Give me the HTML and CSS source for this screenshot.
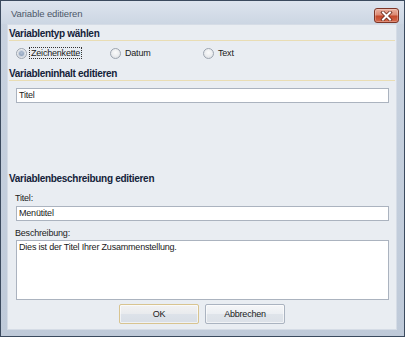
FILE: index.html
```html
<!DOCTYPE html>
<html lang="de">
<head>
<meta charset="utf-8">
<title>Variable editieren</title>
<link rel="stylesheet" href="styles.css">
</head>
<body>
<div class="window">
  <div class="titlebar">
    <span class="title">Variable editieren</span>
    <button class="close" aria-label="Schließen">
      <svg width="13" height="10" viewBox="0 0 13 10">
        <path d="M3 1.5 L10 8.5 M10 1.5 L3 8.5" stroke="#6a2a1c" stroke-width="3.6" stroke-linecap="square" fill="none"/>
        <path d="M3 1.5 L10 8.5 M10 1.5 L3 8.5" stroke="#ffffff" stroke-width="2" stroke-linecap="square" fill="none"/>
      </svg>
    </button>
  </div>
  <div class="content">
    <div class="heading">Variablentyp wählen</div>
    <div class="radios">
      <div class="radio"><span class="circle checked"></span><span class="rlabel focus">Zeichenkette</span></div>
      <div class="radio"><span class="circle"></span><span class="rlabel">Datum</span></div>
      <div class="radio"><span class="circle"></span><span class="rlabel">Text</span></div>
    </div>
    <div class="heading h2">Variableninhalt editieren</div>
    <div class="form first">
      <div class="input">Titel</div>
    </div>
    <div class="heading h3">Variablenbeschreibung editieren</div>
    <div class="form">
      <div class="label">Titel:</div>
      <div class="input">Menütitel</div>
      <div class="label l2">Beschreibung:</div>
      <div class="textarea">Dies ist der Titel Ihrer Zusammenstellung.</div>
    </div>
    <div class="buttons">
      <button class="btn default">OK</button>
      <button class="btn">Abbrechen</button>
    </div>
  </div>
</div>
</body>
</html>
```
FILE: styles.css
```css
* { box-sizing: border-box; }
html, body { margin: 0; padding: 0; }
body {
  width: 405px;
  height: 337px;
  overflow: hidden;
  font-family: "Liberation Sans", Arial, sans-serif;
  font-size: 9px;
  letter-spacing: -0.2px;
  color: #1a1a1a;
}
.window {
  width: 405px;
  height: 337px;
  border: 1px solid #3b4a5e;
  background: linear-gradient(#c9d3e0, #bfcad9);
  padding: 0 7px 6px 6px;
  display: flex;
  flex-direction: column;
}
.titlebar {
  height: 23px;
  display: flex;
  align-items: flex-start;
  margin: 0 -7px 0 -6px;
  padding: 0 5px 0 10px;
  background: linear-gradient(#dde4ee, #ccd6e3);
}
.title {
  margin-top: 7px;
  font-size: 9.5px;
  letter-spacing: -0.1px;
  line-height: 12px;
  color: #4c5868;
}
.close {
  margin: 7px 0 0 auto;
  width: 25px;
  height: 15px;
  padding: 0;
  border: 1px solid #7d3526;
  border-radius: 3px;
  background: linear-gradient(#eab0a0 0%, #dd8a74 45%, #c4492c 55%, #d5694c 100%);
  display: flex;
  align-items: center;
  justify-content: center;
  box-shadow: inset 0 0 0 1px rgba(255,255,255,0.25);
}
.close svg { display: block; }
.content {
  flex: 1;
  border: 1px solid #d5dce6;
  background: #e9edf2;
  padding: 2px 0 5px 0;
  display: flex;
  flex-direction: column;
}
.heading {
  margin: 0 1px;
  height: 14px;
  line-height: 13px;
  font-size: 10px;
  letter-spacing: -0.3px;
  font-weight: bold;
  color: #14223a;
  border-bottom: 1px solid #e9ddb4;
}
.h2 { margin-top: 8px; }
.h3 { margin-top: 69px; border-bottom-color: transparent; }
.radios {
  margin-top: 6px;
  height: 12px;
  padding-left: 8px;
  display: grid;
  grid-template-columns: 94px 93px 94px;
}
.radio {
  display: flex;
  align-items: center;
  gap: 2px;
}
.circle {
  width: 11px;
  height: 11px;
  border-radius: 50%;
  border: 1px solid #9da5b0;
  background: radial-gradient(circle at 50% 40%, #fbfbfb 0%, #eceef0 50%, #d4d8dd 100%);
  display: flex;
  align-items: center;
  justify-content: center;
}
.circle.checked::after {
  content: "";
  width: 5px;
  height: 5px;
  border-radius: 50%;
  background: radial-gradient(circle at 50% 40%, #b5c3d6, #7d93b0);
  box-shadow: 0 0 0 1px #c9d2de;
}
.rlabel {
  line-height: 10px;
  padding: 0 1px;
  border: 1px dotted transparent;
}
.rlabel.focus { border-color: #333; }
.form {
  padding: 0 7px 0 8px;
  display: flex;
  flex-direction: column;
}
.first { margin-top: 7px; }
.label {
  margin-top: 6px;
  margin-left: -1px;
  line-height: 12px;
}
.input {
  margin-top: 2px;
  height: 15px;
  border: 1px solid #abb3bf;
  background: #fff;
  padding: 0 2px;
  line-height: 13px;
}
.first .input { margin-top: 0; }
.label.l2 { margin-top: 6px; }
.textarea {
  margin-top: 1px;
  height: 60px;
  border: 1px solid #abb3bf;
  background: #fff;
  padding: 0 2px;
  line-height: 12px;
}
.buttons {
  margin-top: 4px;
  display: flex;
  justify-content: center;
  gap: 6px;
}
.btn {
  width: 80px;
  height: 20px;
  padding: 0;
  font-family: inherit;
  font-size: 9px;
  letter-spacing: -0.2px;
  color: #1a1a1a;
  border: 1px solid #aab3c0;
  border-radius: 2px;
  background: linear-gradient(#f5f6f8 0%, #eceff3 48%, #dfe4ea 52%, #dce1e8 100%);
  box-shadow: inset 0 0 0 1px rgba(255,255,255,0.6);
}
.btn.default {
  border-color: #d8c490;
  background: linear-gradient(#f2f2f2 0%, #e9ebee 48%, #dde2e9 52%, #d8dee6 100%);
}
```
